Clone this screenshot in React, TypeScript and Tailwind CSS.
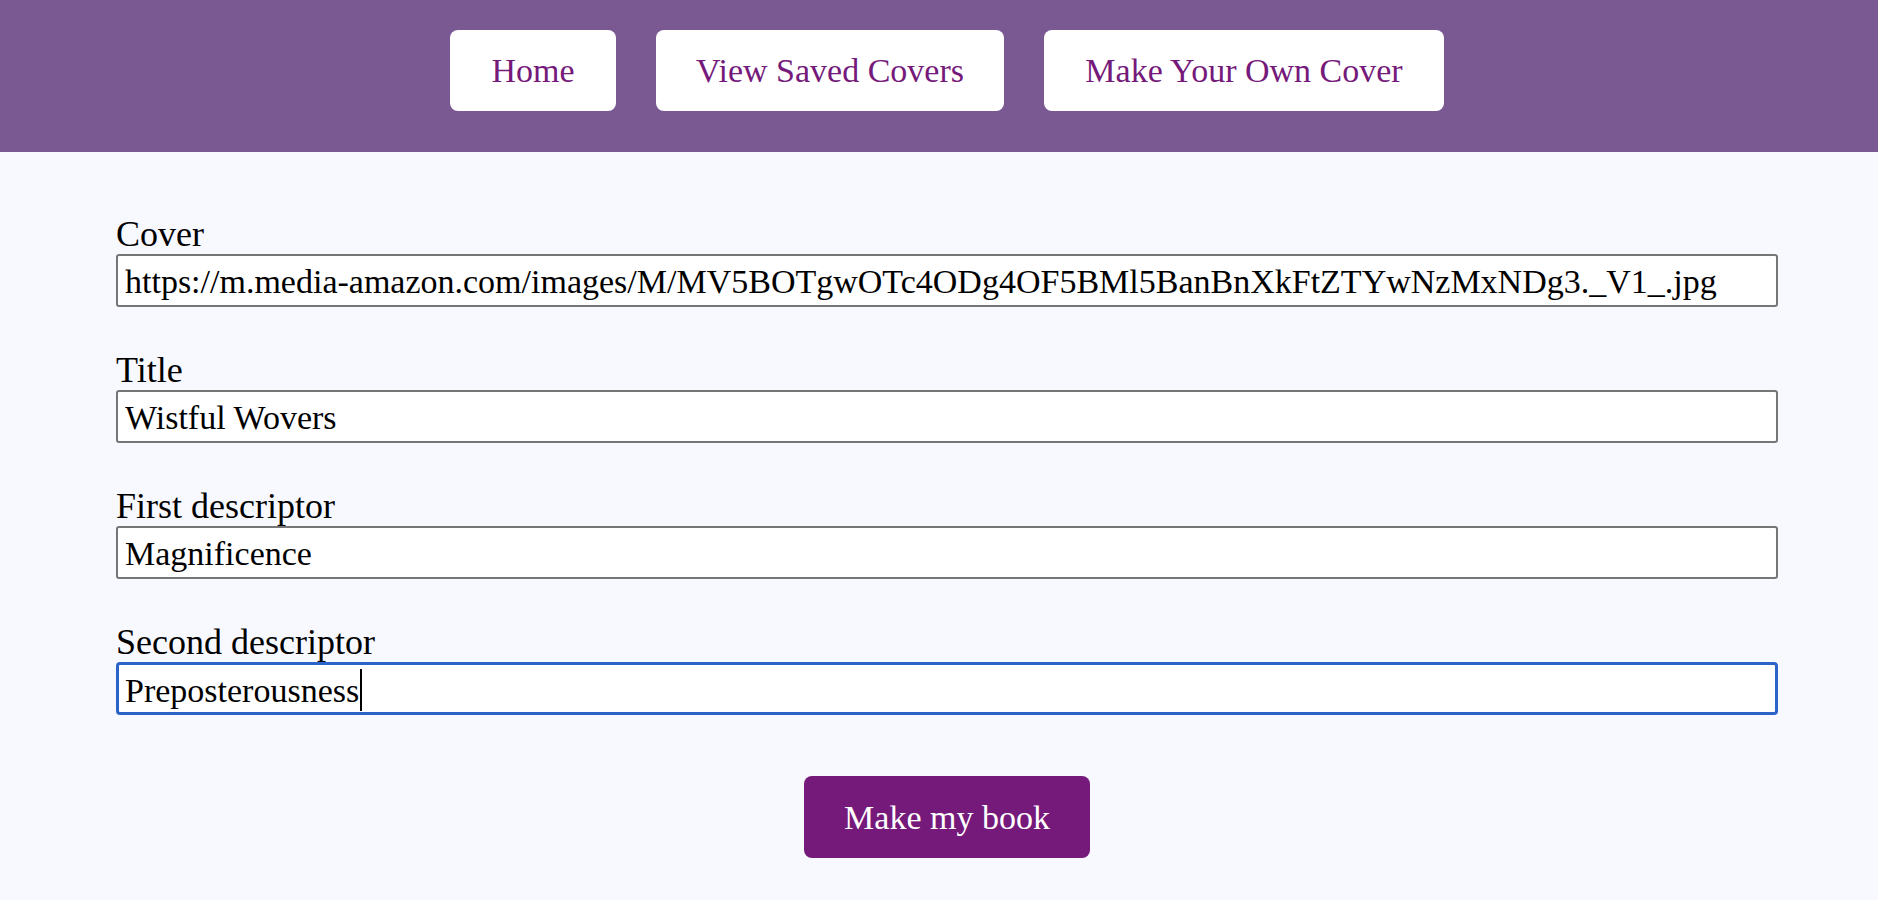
import React from "react";

const font = { fontFamily: '"Liberation Serif", "Times New Roman", serif' };

function Field({ label, value }: { label: string; value: string }) {
  return (
    <div className="mb-[45px]">
      <label className="block h-[36px] text-[36px] leading-[36px] text-black">{label}</label>
      <input
        readOnly
        value={value}
        className="mt-[2px] block h-[53px] w-[1662px] rounded-[3px] border-2 border-[#767676] bg-white px-[7px] pt-[3px] text-[34px] text-black outline-none"
        style={font}
      />
    </div>
  );
}

export default function App() {
  return (
    <div className="min-h-screen bg-[#f8f8ff]" style={font}>
      <header className="flex h-[152px] justify-center gap-[40px] bg-[#7a5992] pl-[16px] pt-[30px]">
        <button className="h-[81px] w-[166px] rounded-[8px] bg-white text-[34px] text-[#751a7a]">Home</button>
        <button className="h-[81px] w-[348px] rounded-[8px] bg-white text-[34px] text-[#751a7a]">View Saved Covers</button>
        <button className="h-[81px] w-[400px] rounded-[8px] bg-white text-[34px] text-[#751a7a]">Make Your Own Cover</button>
      </header>
      <main className="pl-[116px] pt-[64px]">
        <div className="w-[1662px]">
          <Field
            label="Cover"
            value="https://m.media-amazon.com/images/M/MV5BOTgwOTc4ODg4OF5BMl5BanBnXkFtZTYwNzMxNDg3._V1_.jpg"
          />
          <Field label="Title" value="Wistful Wovers" />
          <Field label="First descriptor" value="Magnificence" />
          <div>
            <label className="block h-[36px] text-[36px] leading-[36px] text-black">Second descriptor</label>
            <div
              role="textbox"
              className="mt-[2px] flex h-[53px] w-[1662px] items-center rounded-[4px] border-[3px] border-[#2b63c8] bg-white px-[6px] pt-[3px] text-[34px] text-black"
            >
              <span>Preposterousness</span>
              <span className="ml-[1px] inline-block h-[42px] w-[2px] bg-black" />
            </div>
          </div>
          <div className="mt-[61px] flex justify-center">
            <button className="h-[82px] w-[286px] rounded-[8px] bg-[#751a7a] text-[34px] text-white">Make my book</button>
          </div>
        </div>
      </main>
    </div>
  );
}
